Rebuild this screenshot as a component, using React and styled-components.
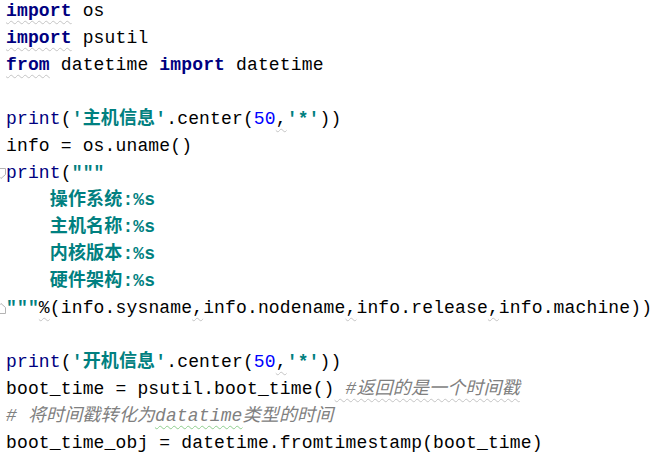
import styled, { createGlobalStyle } from "styled-components";

const GlobalStyle = createGlobalStyle`
  html, body {
    margin: 0;
    padding: 0;
    background: #ffffff;
  }
`;

const Editor = styled.div`
  width: 665px;
  height: 452px;
  overflow: hidden;
  background: #ffffff;
`;

const Code = styled.div`
  display: flex;
  flex-direction: column;
  margin-top: -2px;
`;

const Line = styled.div`
  display: flex;
  align-items: center;
  height: 27px;
  line-height: 27px;
  white-space: pre;
  font-family: "Liberation Mono", "Noto Sans CJK SC", monospace;
  font-size: 18px;
  letter-spacing: 0.15px;
  color: #000000;
`;

const Gutter = styled.div`
  width: 6px;
  flex: none;
  display: flex;
  align-items: center;
  overflow: hidden;
`;

const colors = {
  text: "#000000",
  kw: "#000080",
  builtin: "#000080",
  str: "#008080",
  num: "#0000ff",
  comment: "#808080",
};

const Token = styled.span`
  color: ${(p) => colors[p.$kind] || "#000000"};
  font-weight: ${(p) => (p.$kind === "kw" || p.$kind === "str" ? 700 : 400)};
  font-style: ${(p) => (p.$kind === "comment" ? "italic" : "normal")};
  text-decoration: ${(p) => (p.$wave ? "underline wavy" : "none")};
  text-decoration-color: ${(p) => (p.$wave === "green" ? "#8fce8f" : "#c4c4c4")};
  text-decoration-thickness: 1px;
  text-underline-offset: 4px;
`;

function FoldIcon({ end }) {
  return (
    <svg width="6" height="11" viewBox="0 0 6 11">
      {end ? (
        <polygon
          points="-3,4.5 1,0.5 5.5,4.5 5.5,10.5 -3,10.5"
          fill="#ffffff"
          stroke="#b4b4b4"
          strokeWidth="1"
        />
      ) : (
        <polygon
          points="-3,0.5 5.5,0.5 5.5,6.5 1,10.5 -3,6.5"
          fill="#ffffff"
          stroke="#b4b4b4"
          strokeWidth="1"
        />
      )}
    </svg>
  );
}

const lines = [
  { t: [["kw", "import", "gray"], ["text", " os"]] },
  { t: [["kw", "import", "gray"], ["text", " psutil"]] },
  {
    t: [
      ["kw", "from", "gray"],
      ["text", " datetime "],
      ["kw", "import"],
      ["text", " datetime"],
    ],
  },
  { t: [] },
  {
    t: [
      ["builtin", "print"],
      ["text", "("],
      ["str", "'主机信息'"],
      ["text", ".center("],
      ["num", "50"],
      ["text", ",", "gray"],
      ["str", "'*'"],
      ["text", "))"],
    ],
  },
  { t: [["text", "info = os.uname()"]] },
  { fold: "start", t: [["builtin", "print"], ["text", "("], ["str", '"""']] },
  { t: [["str", "    操作系统:%s"]] },
  { t: [["str", "    主机名称:%s"]] },
  { t: [["str", "    内核版本:%s"]] },
  { t: [["str", "    硬件架构:%s"]] },
  {
    fold: "end",
    t: [
      ["str", '"""'],
      ["text", "%", "gray"],
      ["text", "(info.sysname"],
      ["text", ",", "gray"],
      ["text", "info.nodename"],
      ["text", ",", "gray"],
      ["text", "info.release"],
      ["text", ",", "gray"],
      ["text", "info.machine))"],
    ],
  },
  { t: [] },
  {
    t: [
      ["builtin", "print"],
      ["text", "("],
      ["str", "'开机信息'"],
      ["text", ".center("],
      ["num", "50"],
      ["text", ",", "gray"],
      ["str", "'*'"],
      ["text", "))"],
    ],
  },
  {
    t: [
      ["text", "boot_time = psutil.boot_time()"],
      ["comment", " #返回的是一个时间戳", "gray"],
    ],
  },
  {
    t: [
      ["comment", "# 将时间戳转化为"],
      ["comment", "datatime", "green"],
      ["comment", "类型的时间"],
    ],
  },
  { t: [["text", "boot_time_obj = datetime.fromtimestamp(boot_time)"]] },
];

export default function App() {
  return (
    <Editor>
      <GlobalStyle />
      <Code>
        {lines.map((line, i) => (
          <Line key={i}>
            <Gutter>{line.fold && <FoldIcon end={line.fold === "end"} />}</Gutter>
            {line.t.map(([kind, text, wave], j) => (
              <Token key={j} $kind={kind} $wave={wave}>
                {text}
              </Token>
            ))}
          </Line>
        ))}
      </Code>
    </Editor>
  );
}
